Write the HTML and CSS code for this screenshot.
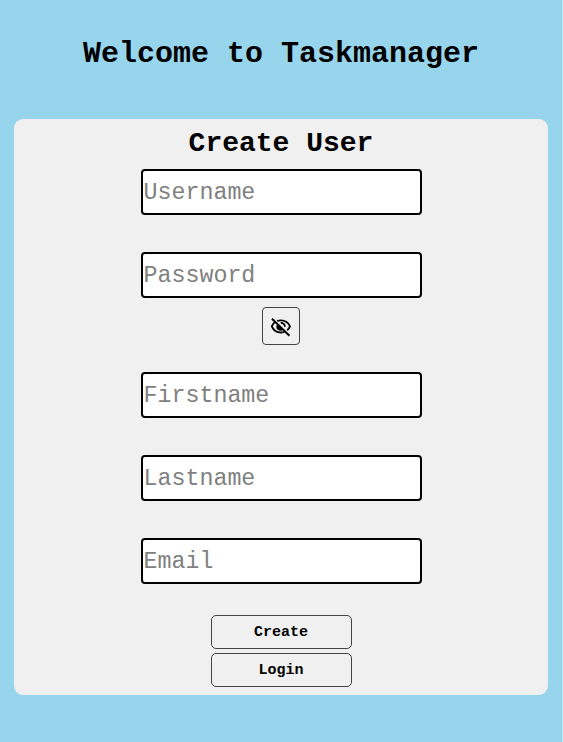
FILE: index.html
```html
<!DOCTYPE html>
<html lang="en">
<head>
<meta charset="utf-8">
<title>Taskmanager</title>
<link rel="stylesheet" href="styles.css">
</head>
<body>
<h1 class="title">Welcome to Taskmanager</h1>
<form class="card">
<h2 class="heading">Create User</h2>
<input class="field" type="text" placeholder="Username">
<input class="field password" type="text" placeholder="Password">
<button class="toggle" type="button" aria-label="Show password">
<svg class="eye" viewBox="0 0 22 22" width="22" height="22" fill="none" stroke="#000" stroke-width="1.8">
<path d="M7.2 4.9C8.4 4.5 9.6 4.3 11 4.3c4.2 0 7.4 2.3 9 6.1-.7 1.6-1.6 2.9-2.8 3.9"/>
<path d="M5 6C3.5 7 2.600 8.500 1.800 10.400 3.400 14.200 6.800 16.500 11 16.500c1.200 0 2.300-.2 3.300-.5"/>
<path d="M10.700 6.800c2.500-.1 4.200 1.500 4.200 4"/>
<path d="M7.300 8.200 13.300 14c-3.200 1.700-7 0-7-3.300 0-1 .4-1.800 1-2.500z" fill="#000" stroke="none"/>
<path d="M2 2.800 19.400 19.800" stroke-width="2"/>
</svg>
</button>
<input class="field" type="text" placeholder="Firstname">
<input class="field" type="text" placeholder="Lastname">
<input class="field" type="text" placeholder="Email">
<button class="action create" type="button">Create</button>
<button class="action" type="button">Login</button>
</form>
</body>
</html>
```
FILE: styles.css
```css
* { box-sizing: border-box; }
html { background: #c3e7f4; }
body { width: 562px; min-height: 742px; margin: 0; background: #97d5ec; font-family: "Courier New", "Liberation Mono", monospace; color: #000; }
.title { margin: 0; padding-top: 36px; height: 119px; font-size: 30px; line-height: 36px; text-align: center; }
.card { width: 534px; height: 576px; margin: 0 auto; border-radius: 9px; background: #f0f0f0; display: flex; flex-direction: column; align-items: center; }
.heading { margin: 7px 0 7px; font-size: 28px; line-height: 36px; }
.field { width: 281px; height: 46px; margin: 0 0 37px; padding: 1px 0 0 1px; border: 2px solid #000; border-radius: 4px; background: #fff; font: 23.3px "Courier New", "Liberation Mono", monospace; flex: none; }
.field::placeholder { color: #808080; }
.password { margin-bottom: 9px; }
.toggle { width: 38px; height: 38px; margin-bottom: 27px; padding: 1px 0 0; border: 1px solid #444; border-radius: 4px; background: #f0f0f0; display: flex; align-items: center; justify-content: center; flex: none; }
.eye { display: block; }
.action { width: 141px; height: 34px; flex: none; padding: 0; border: 1px solid #444; border-radius: 5px; background: #f0f0f0; font: bold 15px "Courier New", "Liberation Mono", monospace; }
.create { margin-top: -6px; margin-bottom: 4px; }
```
